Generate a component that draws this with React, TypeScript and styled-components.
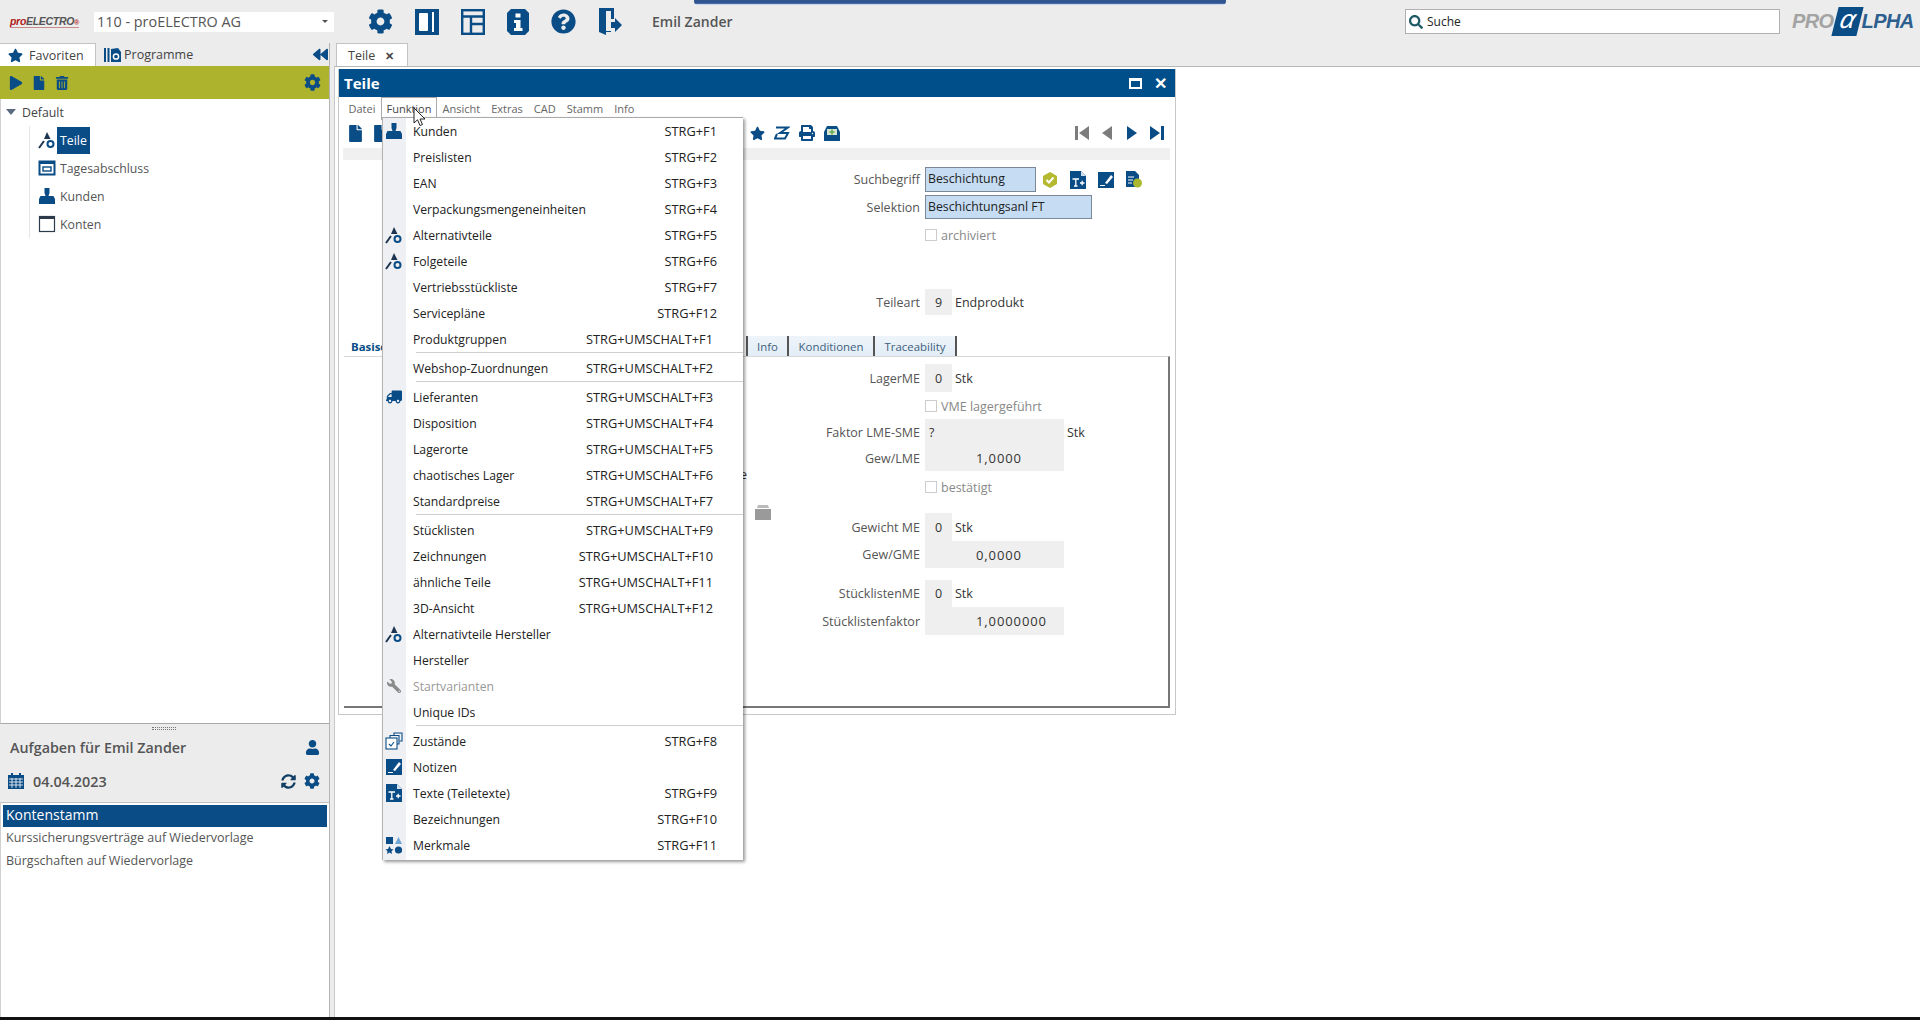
import React from "react";
import styled, { createGlobalStyle } from "styled-components";
import {
  FaBackward,
  FaCog,
  FaFile,
  FaPlay,
  FaPrint,
  FaQuestionCircle,
  FaSearch,
  FaStar,
  FaSyncAlt,
  FaTrashAlt,
  FaTruck,
  FaUser,
  FaWrench,
} from "react-icons/fa";

const BLUE = "#0a4c86";
const FONT = `"Open Sans", "Noto Sans", "Liberation Sans", sans-serif`;

type MenuEntry = {
  label: string;
  keys?: string;
  icon?: React.ReactNode;
  long?: boolean;
  off?: boolean;
  after?: boolean;
};

const PartIcon = () => (
  <svg width="18" height="18" viewBox="0 0 18 18">
    <path d="M1 17 L6 10" stroke="#1d3550" strokeWidth="2" />
    <path d="M9 1 L12.5 8 L6 8 Z" fill="#1d3550" />
    <circle cx="12.5" cy="13" r="3" fill="none" stroke={BLUE} strokeWidth="2" />
  </svg>
);

const PersonIcon = () => (
  <svg width="18" height="18" viewBox="0 0 18 18">
    <path d="M6.5 1 h5 v5 l-1 3 h5 l1.5 3 v5 H1 v-5 l1.5 -3 h5 l-1 -3 z" fill={BLUE} />
  </svg>
);

const DayIcon = () => (
  <svg width="18" height="18" viewBox="0 0 18 18">
    <rect x="1.5" y="2.5" width="15" height="13" fill="#fff" stroke={BLUE} strokeWidth="2" />
    <rect x="1" y="2" width="16" height="3" fill={BLUE} />
    <rect x="5" y="8" width="8" height="4" fill="none" stroke={BLUE} strokeWidth="1.4" />
  </svg>
);

const WindowIcon = () => (
  <svg width="18" height="18" viewBox="0 0 18 18">
    <rect x="1.5" y="1.5" width="15" height="15" fill="#fff" stroke="#2b3b4c" strokeWidth="1.2" />
    <rect x="1" y="1" width="16" height="3" fill="#2b3b4c" />
  </svg>
);

const StatesIcon = () => (
  <svg width="18" height="18" viewBox="0 0 18 18" fill="none" stroke={BLUE} strokeWidth="1.1">
    <rect x="1" y="6" width="11" height="11" fill="#fff" />
    <path d="M5 6 V3.5 H14 V12 H12" />
    <path d="M9 3 V1 H17 V9 H14.5" />
    <path d="M4 12 l2 2 l3 -4" />
  </svg>
);

const NoteIcon = () => (
  <svg width="16" height="16" viewBox="0 0 16 16">
    <rect width="16" height="16" fill={BLUE} />
    <path d="M7 11 L13 3 L15 5 L9 12 Z" fill="#fff" />
    <path d="M2 13.5 H7" stroke="#fff" strokeWidth="1" />
  </svg>
);

const TextDocIcon = () => (
  <svg width="16" height="18" viewBox="0 0 16 18">
    <path d="M0 0 H11 L16 5 V18 H0 Z" fill={BLUE} />
    <path d="M11 0 L16 5 H11 Z" fill="#cfe0ef" />
    <path d="M2.5 8 H9 M5.8 8 V15 M4 15 H7.5 M10 12 H14.5 M12.2 9.8 V14.2" stroke="#fff" strokeWidth="1.3" fill="none" />
  </svg>
);

const TraitsIcon = () => (
  <svg width="18" height="18" viewBox="0 0 18 18" fill={BLUE}>
    <rect x="1" y="1" width="7" height="7" />
    <path d="M13.5 1 L17 8 H10 Z" fill="#6fa6d3" />
    <path d="M4.5 10 L6 13 L8.5 13.4 L6.5 15.2 L7 18 L4.5 16.6 L2 18 L2.5 15.2 L0.5 13.4 L3 13 Z" />
    <circle cx="13.5" cy="14" r="3.6" />
  </svg>
);

const menuItems: MenuEntry[] = [
  { label: "Kunden", keys: "STRG+F1", icon: <PersonIcon /> },
  { label: "Preislisten", keys: "STRG+F2" },
  { label: "EAN", keys: "STRG+F3" },
  { label: "Verpackungsmengeneinheiten", keys: "STRG+F4" },
  { label: "Alternativteile", keys: "STRG+F5", icon: <PartIcon /> },
  { label: "Folgeteile", keys: "STRG+F6", icon: <PartIcon /> },
  { label: "Vertriebsstückliste", keys: "STRG+F7" },
  { label: "Servicepläne", keys: "STRG+F12" },
  { label: "Produktgruppen", keys: "STRG+UMSCHALT+F1", long: true, after: true },
  { label: "Webshop-Zuordnungen", keys: "STRG+UMSCHALT+F2", long: true, after: true },
  { label: "Lieferanten", keys: "STRG+UMSCHALT+F3", long: true, icon: <FaTruck size={16} color={BLUE} style={{ transform: "scaleX(-1)" }} /> },
  { label: "Disposition", keys: "STRG+UMSCHALT+F4", long: true },
  { label: "Lagerorte", keys: "STRG+UMSCHALT+F5", long: true },
  { label: "chaotisches Lager", keys: "STRG+UMSCHALT+F6", long: true },
  { label: "Standardpreise", keys: "STRG+UMSCHALT+F7", long: true, after: true },
  { label: "Stücklisten", keys: "STRG+UMSCHALT+F9", long: true },
  { label: "Zeichnungen", keys: "STRG+UMSCHALT+F10", long: true },
  { label: "ähnliche Teile", keys: "STRG+UMSCHALT+F11", long: true },
  { label: "3D-Ansicht", keys: "STRG+UMSCHALT+F12", long: true },
  { label: "Alternativteile Hersteller", icon: <PartIcon /> },
  { label: "Hersteller" },
  { label: "Startvarianten", off: true, icon: <FaWrench size={14} color="#8a8a8a" style={{ transform: "scaleX(-1)" }} /> },
  { label: "Unique IDs", after: true },
  { label: "Zustände", keys: "STRG+F8", icon: <StatesIcon /> },
  { label: "Notizen", icon: <NoteIcon /> },
  { label: "Texte (Teiletexte)", keys: "STRG+F9", icon: <TextDocIcon /> },
  { label: "Bezeichnungen", keys: "STRG+F10" },
  { label: "Merkmale", keys: "STRG+F11", icon: <TraitsIcon /> },
];

function App() {
  return (
    <Page>
      <GlobalStyle />
      <TopStrip />
      <Header>
        <CompanyLogo>
          <b>pro</b>ELECTRO<i>®</i>
        </CompanyLogo>
        <Combo>
          110 - proELECTRO AG
          <ComboCaret />
        </Combo>
        <HeaderIcons>
          <FaCog size={25} color={BLUE} />
          <svg width="24" height="26" viewBox="0 0 24 26">
            <rect width="24" height="26" fill={BLUE} />
            <rect x="4" y="4" width="9" height="18" rx="1" fill="#fff" />
            <rect x="17" y="3" width="2" height="20" fill="#fff" />
          </svg>
          <svg width="24" height="26" viewBox="0 0 24 26" fill="none" stroke={BLUE} strokeWidth="2.4">
            <rect x="1.2" y="1.2" width="21.6" height="23.6" />
            <path d="M1 7.5 H23 M10 7.5 V25 M10 15 H23" />
          </svg>
          <svg width="22" height="26" viewBox="0 0 22 26">
            <path d="M4 0 H18 L22 4 V22 L18 26 H4 L0 22 V4 Z" fill={BLUE} />
            <rect x="8.5" y="4.5" width="5" height="4" fill="#fff" />
            <path d="M7 11 H13.5 V19 H15.5 V22 H7 V19 H9 V14 H7 Z" fill="#fff" />
          </svg>
          <FaQuestionCircle size={25} color={BLUE} />
          <svg width="24" height="27" viewBox="0 0 24 27">
            <path d="M1 0 H16 V11 H13 V3 H8 V23 H13 V20 H8 H13 V24 H8 V27 L1 24 Z" fill={BLUE} />
            <path d="M13 14 H17 V10 L24 17 L17 24 V20 H13 Z" fill={BLUE} />
          </svg>
        </HeaderIcons>
        <UserName>Emil Zander</UserName>
        <HeaderSpacer />
        <SearchBox>
          <FaSearch size={14} color="#1e5a66" />
          Suche
        </SearchBox>
        <VendorLogo>
          <span>PRO</span>
          <VendorMark>α</VendorMark>
          <strong>LPHA</strong>
        </VendorLogo>
      </Header>

      <Body>
        <Sidebar>
          <SideTabs>
            <SideTab $active>
              <FaStar size={15} color={BLUE} />
              Favoriten
            </SideTab>
            <SideTab>
              <svg width="17" height="16" viewBox="0 0 17 16" fill={BLUE}>
                <rect x="0" y="1" width="2" height="14" />
                <rect x="3.5" y="1" width="2" height="14" />
                <path d="M7 2 L14 1 L17 5 V15 H7 Z" />
                <circle cx="12" cy="9.5" r="2.6" fill="none" stroke="#fff" strokeWidth="1.5" />
              </svg>
              Programme
            </SideTab>
            <Collapse>
              <FaBackward size={15} color={BLUE} />
            </Collapse>
          </SideTabs>
          <GreenBar>
            <FaPlay size={14} color={BLUE} />
            <FaFile size={14} color={BLUE} />
            <FaTrashAlt size={14} color={BLUE} />
            <GreenGear>
              <FaCog size={17} color={BLUE} />
            </GreenGear>
          </GreenBar>
          <Tree>
            <TreeRoot>
              <TreeCaret />
              Default
            </TreeRoot>
            <TreeList>
              <TreeRow>
                <PartIcon />
                <TreeLabel $active>Teile</TreeLabel>
              </TreeRow>
              <TreeRow>
                <DayIcon />
                <TreeLabel>Tagesabschluss</TreeLabel>
              </TreeRow>
              <TreeRow>
                <PersonIcon />
                <TreeLabel>Kunden</TreeLabel>
              </TreeRow>
              <TreeRow>
                <WindowIcon />
                <TreeLabel>Konten</TreeLabel>
              </TreeRow>
            </TreeList>
          </Tree>
          <Grip />
          <TaskTitle>
            Aufgaben für Emil Zander
            <FaUser size={15} color={BLUE} />
          </TaskTitle>
          <TaskDate>
            <svg width="16" height="16" viewBox="0 0 16 16" fill={BLUE}>
              <path d="M0 2 H3 V0 H5 V2 H11 V0 H13 V2 H16 V16 H0 Z" />
              <path d="M1 6 H15 M1 9 H15 M1 12 H15 M4 5 V15 M8 5 V15 M12 5 V15" stroke="#fff" strokeWidth="0.8" />
            </svg>
            <span>04.04.2023</span>
            <TaskDateTools>
              <FaSyncAlt size={15} color="#123f63" />
              <FaCog size={16} color={BLUE} />
            </TaskDateTools>
          </TaskDate>
          <TaskList>
            <TaskRow $active>Kontenstamm</TaskRow>
            <TaskRow>Kurssicherungsverträge auf Wiedervorlage</TaskRow>
            <TaskRow>Bürgschaften auf Wiedervorlage</TaskRow>
          </TaskList>
        </Sidebar>

        <Main>
          <DocTabs>
            <DocTab>
              Teile
              <DocClose>✕</DocClose>
            </DocTab>
          </DocTabs>
          <Workspace>
            <Window>
              <TitleBar>
                Teile
                <TitleTools>
                  <MaxBox />
                  <CloseMark>✕</CloseMark>
                </TitleTools>
              </TitleBar>
              <MenuBar>
                <MenuTitle>Datei</MenuTitle>
                <MenuTitle $open>Funktion</MenuTitle>
                <MenuTitle>Ansicht</MenuTitle>
                <MenuTitle>Extras</MenuTitle>
                <MenuTitle>CAD</MenuTitle>
                <MenuTitle>Stamm</MenuTitle>
                <MenuTitle>Info</MenuTitle>
              </MenuBar>
              <Toolbar>
                <FaFile size={17} color={BLUE} />
                <FaFile size={17} color={BLUE} />
                <ToolbarRight>
                  <FaStar size={15} color={BLUE} />
                  <svg width="16" height="14" viewBox="0 0 16 14" fill="none" stroke={BLUE} strokeWidth="2">
                    <path d="M2 1.5 H14 L6 7 H14 L11 12.5 H1 L3 8" />
                  </svg>
                  <FaPrint size={16} color={BLUE} />
                  <svg width="16" height="15" viewBox="0 0 16 15">
                    <path d="M3 0 H13 L16 6 V15 H0 V6 Z" fill={BLUE} />
                    <rect x="3" y="3" width="10" height="6" fill="#d5e4d0" />
                    <path d="M8 3.5 V8.5 M5.5 6 H10.5" stroke="#6aa84f" strokeWidth="1.6" />
                  </svg>
                </ToolbarRight>
                <ToolbarNav>
                  <NavGlyph $off>
                    <path d="M0 0 H3 V14 H0 Z M14 0 V14 L4 7 Z" />
                  </NavGlyph>
                  <NavGlyph $off>
                    <path d="M12 0 V14 L2 7 Z" />
                  </NavGlyph>
                  <NavGlyph>
                    <path d="M2 0 V14 L12 7 Z" />
                  </NavGlyph>
                  <NavGlyph>
                    <path d="M0 0 V14 L10 7 Z M11 0 H14 V14 H11 Z" />
                  </NavGlyph>
                </ToolbarNav>
              </Toolbar>
              <GrayStrip />

              <HeadForm>
                <FormRow $h={25} $top={7}>
                  <FieldLabel>Suchbegriff</FieldLabel>
                  <KeyInput $w={111}>Beschichtung</KeyInput>
                  <KeyTools>
                    <svg width="16" height="16" viewBox="0 0 16 16">
                      <path d="M8 0 L15 4 V12 L8 16 L1 12 V4 Z" fill="#b4b92f" />
                      <path d="M4.5 8 L7 10.5 L11.5 5.5" stroke="#fff" strokeWidth="2" fill="none" />
                    </svg>
                    <TextDocIcon />
                    <NoteIcon />
                    <svg width="16" height="17" viewBox="0 0 16 17">
                      <path d="M0 0 H9 L13 4 V16 H0 Z" fill={BLUE} />
                      <path d="M2 6 H8 M2 9 H7 M2 12 H6" stroke="#fff" strokeWidth="1" />
                      <circle cx="11.5" cy="12" r="4.5" fill="#a9b82f" />
                    </svg>
                  </KeyTools>
                </FormRow>
                <FormRow $h={24} $top={3}>
                  <FieldLabel>Selektion</FieldLabel>
                  <KeyInput $w={167}>Beschichtungsanl FT</KeyInput>
                </FormRow>
                <FormRow $h={26} $top={3}>
                  <span />
                  <CheckRow>
                    <CheckBox />
                    archiviert
                  </CheckRow>
                </FormRow>
                <FormRow $h={26} $top={41}>
                  <FieldLabel>Teileart</FieldLabel>
                  <FieldValue>
                    <ShortBox>9</ShortBox>
                    <Unit>Endprodukt</Unit>
                  </FieldValue>
                </FormRow>
              </HeadForm>

              <PageTabs>
                <PageTab $lead $w={405}>Basisdaten</PageTab>
                <PageTab $w={41}>Info</PageTab>
                <PageTab $w={86}>Konditionen</PageTab>
                <PageTab $w={82}>Traceability</PageTab>
              </PageTabs>
              <Frame>
                <FrameLeft>
                  <HiddenEnd>e</HiddenEnd>
                  <FolderMark>
                    <svg width="16" height="15" viewBox="0 0 16 15">
                      <path d="M3 0 H13 L14 3 H2 Z" fill="#bbb" />
                      <rect y="4" width="16" height="11" fill="#9a9a9a" />
                    </svg>
                  </FolderMark>
                </FrameLeft>
                <FrameRight>
                  <FormRow $h={28} $top={7}>
                    <FieldLabel>LagerME</FieldLabel>
                    <FieldValue>
                      <ShortBox>0</ShortBox>
                      <Unit>Stk</Unit>
                    </FieldValue>
                  </FormRow>
                  <FormRow $h={26} $top={1}>
                    <span />
                    <CheckRow>
                      <CheckBox />
                      VME lagergeführt
                    </CheckRow>
                  </FormRow>
                  <FormRow $h={26} $top={0}>
                    <FieldLabel>Faktor LME-SME</FieldLabel>
                    <FieldValue>
                      <WideBox>?</WideBox>
                      <Unit>Stk</Unit>
                    </FieldValue>
                  </FormRow>
                  <FormRow $h={26} $top={0}>
                    <FieldLabel>Gew/LME</FieldLabel>
                    <NumberBox>1,0000</NumberBox>
                  </FormRow>
                  <FormRow $h={26} $top={3}>
                    <span />
                    <CheckRow>
                      <CheckBox />
                      bestätigt
                    </CheckRow>
                  </FormRow>
                  <FormRow $h={28} $top={13}>
                    <FieldLabel>Gewicht ME</FieldLabel>
                    <FieldValue>
                      <ShortBox>0</ShortBox>
                      <Unit>Stk</Unit>
                    </FieldValue>
                  </FormRow>
                  <FormRow $h={27} $top={0}>
                    <FieldLabel>Gew/GME</FieldLabel>
                    <NumberBox>0,0000</NumberBox>
                  </FormRow>
                  <FormRow $h={27} $top={12}>
                    <FieldLabel>StücklistenME</FieldLabel>
                    <FieldValue>
                      <ShortBox>0</ShortBox>
                      <Unit>Stk</Unit>
                    </FieldValue>
                  </FormRow>
                  <FormRow $h={28} $top={0}>
                    <FieldLabel>Stücklistenfaktor</FieldLabel>
                    <NumberBox>1,0000000</NumberBox>
                  </FormRow>
                </FrameRight>
              </Frame>

              <DropMenu>
                {menuItems.map((item) => (
                  <React.Fragment key={item.label}>
                    <MenuRow $off={item.off}>
                      <MenuIcon>{item.icon}</MenuIcon>
                      <MenuLabel>{item.label}</MenuLabel>
                      <MenuKeys $long={item.long}>{item.keys}</MenuKeys>
                    </MenuRow>
                    {item.after && <MenuLine />}
                  </React.Fragment>
                ))}
              </DropMenu>
              <Pointer width="14" height="20" viewBox="0 0 14 20">
                <path d="M1 1 V16 L4.5 12.8 L7 18.5 L9.5 17.5 L7 12 H12 Z" fill="#fff" stroke="#222" strokeWidth="1" />
              </Pointer>
            </Window>
          </Workspace>
        </Main>
      </Body>
      <BottomStrip />
    </Page>
  );
}

export default App;

const GlobalStyle = createGlobalStyle`
  html, body {
    margin: 0;
    padding: 0;
    background: #ececec;
  }
  * {
    box-sizing: border-box;
  }
`;
const Page = styled.div`
  position: relative;
  display: flex;
  flex-direction: column;
  width: 1920px;
  height: 1020px;
  overflow: hidden;
  background: #ececec;
  font-family: ${FONT};
  font-size: 12.5px;
  color: #444;
`;
const TopStrip = styled.div`
  position: absolute;
  top: 0;
  left: 694px;
  width: 532px;
  height: 5px;
  background: linear-gradient(#2f568f 0 3px, #4a6ca6 3px 4px, #c9d2e8 4px);
  border-radius: 0 0 4px 4px;
`;
const Header = styled.div`
  display: flex;
  align-items: center;
  flex: none;
  height: 43px;
  padding: 0 3px 0 10px;
`;
const CompanyLogo = styled.div`
  width: 69px;
  font-family: "Liberation Sans", sans-serif;
  font-size: 10.5px;
  font-weight: 700;
  font-style: italic;
  letter-spacing: -0.3px;
  color: #555;
  white-space: nowrap;
  border-bottom: 1px solid #c98a8a;
  & > b {
    color: #b01c1c;
  }
  & > i {
    color: #b01c1c;
    font-size: 7px;
  }
`;
const Combo = styled.div`
  display: flex;
  align-items: center;
  justify-content: space-between;
  width: 240px;
  height: 20px;
  margin-left: 15px;
  padding: 0 6px 0 3px;
  background: #fff;
  font-size: 14.4px;
  color: #555;
`;
const ComboCaret = styled.span`
  width: 0;
  height: 0;
  border-left: 3px solid transparent;
  border-right: 3px solid transparent;
  border-top: 3px solid #555;
`;
const HeaderIcons = styled.div`
  display: flex;
  align-items: center;
  gap: 22px;
  margin-left: 34px;
`;
const UserName = styled.div`
  margin-left: 30px;
  font-size: 14px;
  font-weight: 600;
  color: #555;
`;
const HeaderSpacer = styled.div`
  flex: 1;
`;
const SearchBox = styled.div`
  display: flex;
  align-items: center;
  gap: 4px;
  width: 375px;
  height: 25px;
  padding-left: 3px;
  background: #fff;
  border: 1px solid #b0b0b0;
  font-size: 12px;
  color: #222;
`;
const VendorLogo = styled.div`
  display: flex;
  align-items: center;
  width: 125px;
  margin-left: 12px;
  font-family: "Liberation Sans", sans-serif;
  font-size: 20px;
  font-style: italic;
  font-weight: 700;
  & > span {
    color: #a3a3a3;
    letter-spacing: -0.6px;
  }
  & > strong {
    color: #2d5f8f;
    letter-spacing: -0.6px;
  }
`;
const VendorMark = styled.div`
  width: 25px;
  height: 29px;
  margin: 0 2px 0 1px;
  background: ${BLUE};
  color: #fff;
  font-size: 26px;
  font-weight: 400;
  line-height: 25px;
  text-align: center;
  transform: skewX(-14deg);
`;
const Body = styled.div`
  display: flex;
  flex: 1;
  min-height: 0;
`;
const Sidebar = styled.div`
  display: flex;
  flex-direction: column;
  flex: none;
  width: 330px;
  border-right: 1px solid #b4b4b4;
`;
const SideTabs = styled.div`
  display: flex;
  align-items: stretch;
  flex: none;
  height: 23px;
`;
const SideTab = styled.div<{ $active?: boolean }>`
  display: flex;
  align-items: center;
  gap: ${(p) => (p.$active ? "6px" : "3px")};
  padding: 0 ${(p) => (p.$active ? "8px" : "6px")};
  width: ${(p) => (p.$active ? "96px" : "auto")};
  margin-right: ${(p) => (p.$active ? "2px" : "0")};
  background: ${(p) => (p.$active ? "#fff" : "transparent")};
  border-top: ${(p) => (p.$active ? "1px solid #c4c4c4" : "none")};
  border-right: ${(p) => (p.$active ? "1px solid #c4c4c4" : "none")};
`;
const Collapse = styled.div`
  display: flex;
  align-items: center;
  margin-left: auto;
  padding-right: 1px;
`;
const GreenBar = styled.div`
  display: flex;
  align-items: center;
  gap: 9px;
  flex: none;
  height: 33px;
  padding: 0 8px 0 9px;
  background: #aeb32e;
`;
const GreenGear = styled.div`
  display: flex;
  margin-left: auto;
`;
const Tree = styled.div`
  flex: 1;
  background: #fff;
  border-left: 1px solid #d0d0d0;
  border-bottom: 1px solid #a8a8a8;
`;
const TreeRoot = styled.div`
  display: flex;
  align-items: center;
  gap: 6px;
  height: 26px;
  padding-left: 5px;
  font-size: 12.3px;
`;
const TreeCaret = styled.span`
  width: 0;
  height: 0;
  border-left: 5px solid transparent;
  border-right: 5px solid transparent;
  border-top: 6px solid #5c6a80;
`;
const TreeList = styled.div`
  margin: 1px 0 0 28px;
  border-left: 1px solid #e6e6e6;
`;
const TreeRow = styled.div`
  display: flex;
  align-items: center;
  gap: 1px;
  height: 28px;
  padding-left: 8px;
`;
const TreeLabel = styled.span<{ $active?: boolean }>`
  display: flex;
  align-items: center;
  height: 27px;
  padding: 0 3px;
  font-size: 12.3px;
  background: ${(p) => (p.$active ? BLUE : "transparent")};
  color: ${(p) => (p.$active ? "#fff" : "#555")};
`;
const Grip = styled.div`
  flex: none;
  width: 24px;
  height: 3px;
  margin: 3px auto 3px 152px;
  border-top: 1px dotted #777;
  border-bottom: 1px dotted #777;
`;
const TaskTitle = styled.div`
  display: flex;
  align-items: center;
  justify-content: space-between;
  flex: none;
  height: 28px;
  margin-bottom: 2px;
  padding: 0 9px 0 10px;
  font-size: 14.3px;
  font-weight: 600;
  color: #555;
`;
const TaskDate = styled.div`
  display: flex;
  align-items: center;
  gap: 9px;
  flex: none;
  height: 39px;
  padding: 0 9px 3px 8px;
  font-size: 14.4px;
  font-weight: 600;
  color: #555;
`;
const TaskDateTools = styled.div`
  display: flex;
  align-items: center;
  gap: 8px;
  margin-left: auto;
`;
const TaskList = styled.div`
  flex: none;
  height: 215px;
  padding: 2px 2px 0;
  background: #fff;
  border-top: 1px solid #c0c0c0;
  border-left: 1px solid #d0d0d0;
`;
const TaskRow = styled.div<{ $active?: boolean }>`
  display: flex;
  align-items: center;
  height: ${(p) => (p.$active ? "22px" : "23px")};
  padding: 0 0 3px 3px;
  font-size: ${(p) => (p.$active ? "14px" : "12.5px")};
  background: ${(p) => (p.$active ? BLUE : "transparent")};
  color: ${(p) => (p.$active ? "#fff" : "#555")};
`;
const Main = styled.div`
  display: flex;
  flex-direction: column;
  flex: 1;
  min-width: 0;
`;
const DocTabs = styled.div`
  display: flex;
  flex: none;
  height: 23px;
  padding-left: 6px;
`;
const DocTab = styled.div`
  display: flex;
  align-items: center;
  gap: 10px;
  width: 72px;
  padding-left: 11px;
  background: #fff;
  border: 1px solid #c4c4c4;
  border-bottom: none;
  font-size: 12.5px;
`;
const DocClose = styled.span`
  font-size: 11px;
  font-weight: 700;
  color: #444;
`;
const Workspace = styled.div`
  flex: 1;
  margin-left: 4px;
  padding: 2px 0 0 3px;
  background: #fff;
  border-top: 1px solid #b8b8b8;
  border-left: 1px solid #c8c8c8;
`;
const Window = styled.div`
  position: relative;
  display: flex;
  flex-direction: column;
  width: 838px;
  height: 646px;
  background: #fff;
  border: 1px solid #c8c8c8;
  border-top: none;
`;
const TitleBar = styled.div`
  display: flex;
  align-items: center;
  justify-content: space-between;
  flex: none;
  height: 28px;
  padding: 0 8px 0 5px;
  background: #004f8a;
  font-size: 15px;
  font-weight: 700;
  color: #fff;
`;
const TitleTools = styled.div`
  display: flex;
  align-items: center;
  gap: 12px;
`;
const MaxBox = styled.span`
  width: 13px;
  height: 11px;
  border: 1px solid #fff;
  border-width: 3px 2px 2px;
`;
const CloseMark = styled.span`
  font-size: 16px;
  font-weight: 900;
  line-height: 1;
`;
const MenuBar = styled.div`
  display: flex;
  align-items: stretch;
  flex: none;
  height: 23px;
  padding-left: 4px;
  font-size: 11px;
  color: #666;
`;
const MenuTitle = styled.div<{ $open?: boolean }>`
  display: flex;
  align-items: center;
  padding: 0 4.5px 1px;
  border: 1px solid ${(p) => (p.$open ? "#aaa" : "transparent")};
  border-bottom: none;
  color: ${(p) => (p.$open ? "#444" : "#666")};
`;
const Toolbar = styled.div`
  display: flex;
  align-items: center;
  flex: none;
  gap: 8px;
  height: 28px;
  padding: 0 11px 2px 8px;
`;
const ToolbarRight = styled.div`
  display: flex;
  align-items: center;
  gap: 9px;
  margin-left: 353px;
`;
const ToolbarNav = styled.div`
  display: flex;
  align-items: center;
  gap: 11px;
  margin-left: auto;
`;
const NavGlyph = styled.svg.attrs({ width: 14, height: 14, viewBox: "0 0 14 14" })<{ $off?: boolean }>`
  fill: ${(p) => (p.$off ? "#7c7c7c" : BLUE)};
`;
const GrayStrip = styled.div`
  flex: none;
  height: 12px;
  margin: 0 5px 0 4px;
  background: #f0f0f0;
`;
const HeadForm = styled.div`
  flex: none;
  padding-left: 431px;
`;
const FormRow = styled.div<{ $h: number; $top: number }>`
  display: grid;
  grid-template-columns: 150px 1fr;
  column-gap: 5px;
  align-items: center;
  height: ${(p) => p.$h}px;
  margin-top: ${(p) => p.$top}px;
`;
const FieldLabel = styled.div`
  text-align: right;
  font-size: 12.5px;
  color: #555;
`;
const KeyInput = styled.div<{ $w: number }>`
  position: relative;
  display: flex;
  align-items: center;
  width: ${(p) => p.$w}px;
  height: 100%;
  padding: 0 0 2px 2px;
  background: #c5dcf2;
  border: 1px solid #7b8794;
  font-size: 12.3px;
  color: #222;
`;
const KeyTools = styled.div`
  position: absolute;
  display: flex;
  align-items: center;
  gap: 12px;
  margin-left: 272px;
`;
const CheckRow = styled.div`
  display: flex;
  align-items: center;
  gap: 4px;
  font-size: 12.5px;
  color: #888;
`;
const CheckBox = styled.span`
  width: 12px;
  height: 12px;
  background: #fff;
  border: 1px solid #ccc;
`;
const FieldValue = styled.div`
  display: flex;
  align-items: center;
  height: 100%;
`;
const ShortBox = styled.div`
  display: flex;
  align-items: center;
  justify-content: center;
  width: 27px;
  height: 100%;
  background: #efefef;
  font-size: 12.5px;
  color: #333;
`;
const WideBox = styled.div`
  display: flex;
  align-items: center;
  width: 139px;
  height: 100%;
  padding-left: 4px;
  background: #efefef;
  font-size: 12.5px;
  color: #333;
`;
const NumberBox = styled.div`
  display: flex;
  align-items: center;
  width: 139px;
  height: 100%;
  padding-left: 51px;
  background: #efefef;
  font-size: 13px;
  letter-spacing: 0.9px;
  color: #333;
`;
const Unit = styled.span`
  margin-left: 3px;
  font-size: 12.5px;
  color: #333;
`;
const PageTabs = styled.div`
  display: flex;
  flex: none;
  height: 20px;
  margin-top: 21px;
  padding-left: 4px;
`;
const PageTab = styled.div<{ $lead?: boolean; $w: number }>`
  display: flex;
  align-items: center;
  justify-content: ${(p) => (p.$lead ? "flex-start" : "center")};
  width: ${(p) => p.$w}px;
  padding-left: ${(p) => (p.$lead ? "8px" : "0")};
  background: ${(p) => (p.$lead ? "transparent" : "linear-gradient(#eef4fa, #e2edf7)")};
  border-right: 2px solid #555;
  font-size: 11.4px;
  font-weight: ${(p) => (p.$lead ? 700 : 400)};
  color: ${(p) => (p.$lead ? BLUE : "#3d5f7d")};
`;
const Frame = styled.div`
  display: flex;
  flex: none;
  height: 352px;
  margin: 0 5px;
  border-top: 1px solid #d8d8d8;
  border-right: 2px solid #777;
  border-bottom: 2px solid #777;
`;
const FrameLeft = styled.div`
  display: flex;
  flex-direction: column;
  align-items: flex-end;
  width: 426px;
  padding-top: 110px;
  font-size: 12.5px;
  color: #333;
`;
const HiddenEnd = styled.span`
  margin-right: 23px;
  line-height: 16px;
`;
const FolderMark = styled.div`
  display: flex;
  margin-top: 22px;
  margin-right: -1px;
`;
const FrameRight = styled.div`
  width: 300px;
`;
const DropMenu = styled.div`
  position: absolute;
  top: 48px;
  left: 43px;
  width: 361px;
  height: 743px;
  background: linear-gradient(to right, #eef0f3 23px, #fff 23px);
  border-top: 1px solid #aaa;
  border-left: 1px solid #b4b4b4;
  box-shadow: 2px 2px 3px rgba(0, 0, 0, 0.4);
`;
const MenuRow = styled.div<{ $off?: boolean }>`
  display: flex;
  align-items: center;
  height: 26px;
  font-size: 12.2px;
  color: ${(p) => (p.$off ? "#999" : "#222")};
`;
const MenuIcon = styled.span`
  display: flex;
  align-items: center;
  justify-content: center;
  flex: none;
  width: 22px;
`;
const MenuLabel = styled.span`
  flex: 1;
  margin-left: 8px;
`;
const MenuKeys = styled.span<{ $long?: boolean }>`
  padding-right: ${(p) => (p.$long ? "30px" : "26px")};
  font-size: 12.8px;
`;
const MenuLine = styled.div`
  height: 3px;
  margin-left: 33px;
  border-top: 1px solid #cfcfcf;
`;
const Pointer = styled.svg`
  position: absolute;
  top: 38px;
  left: 74px;
`;
const BottomStrip = styled.div`
  flex: none;
  height: 3px;
  background: #111;
`;
